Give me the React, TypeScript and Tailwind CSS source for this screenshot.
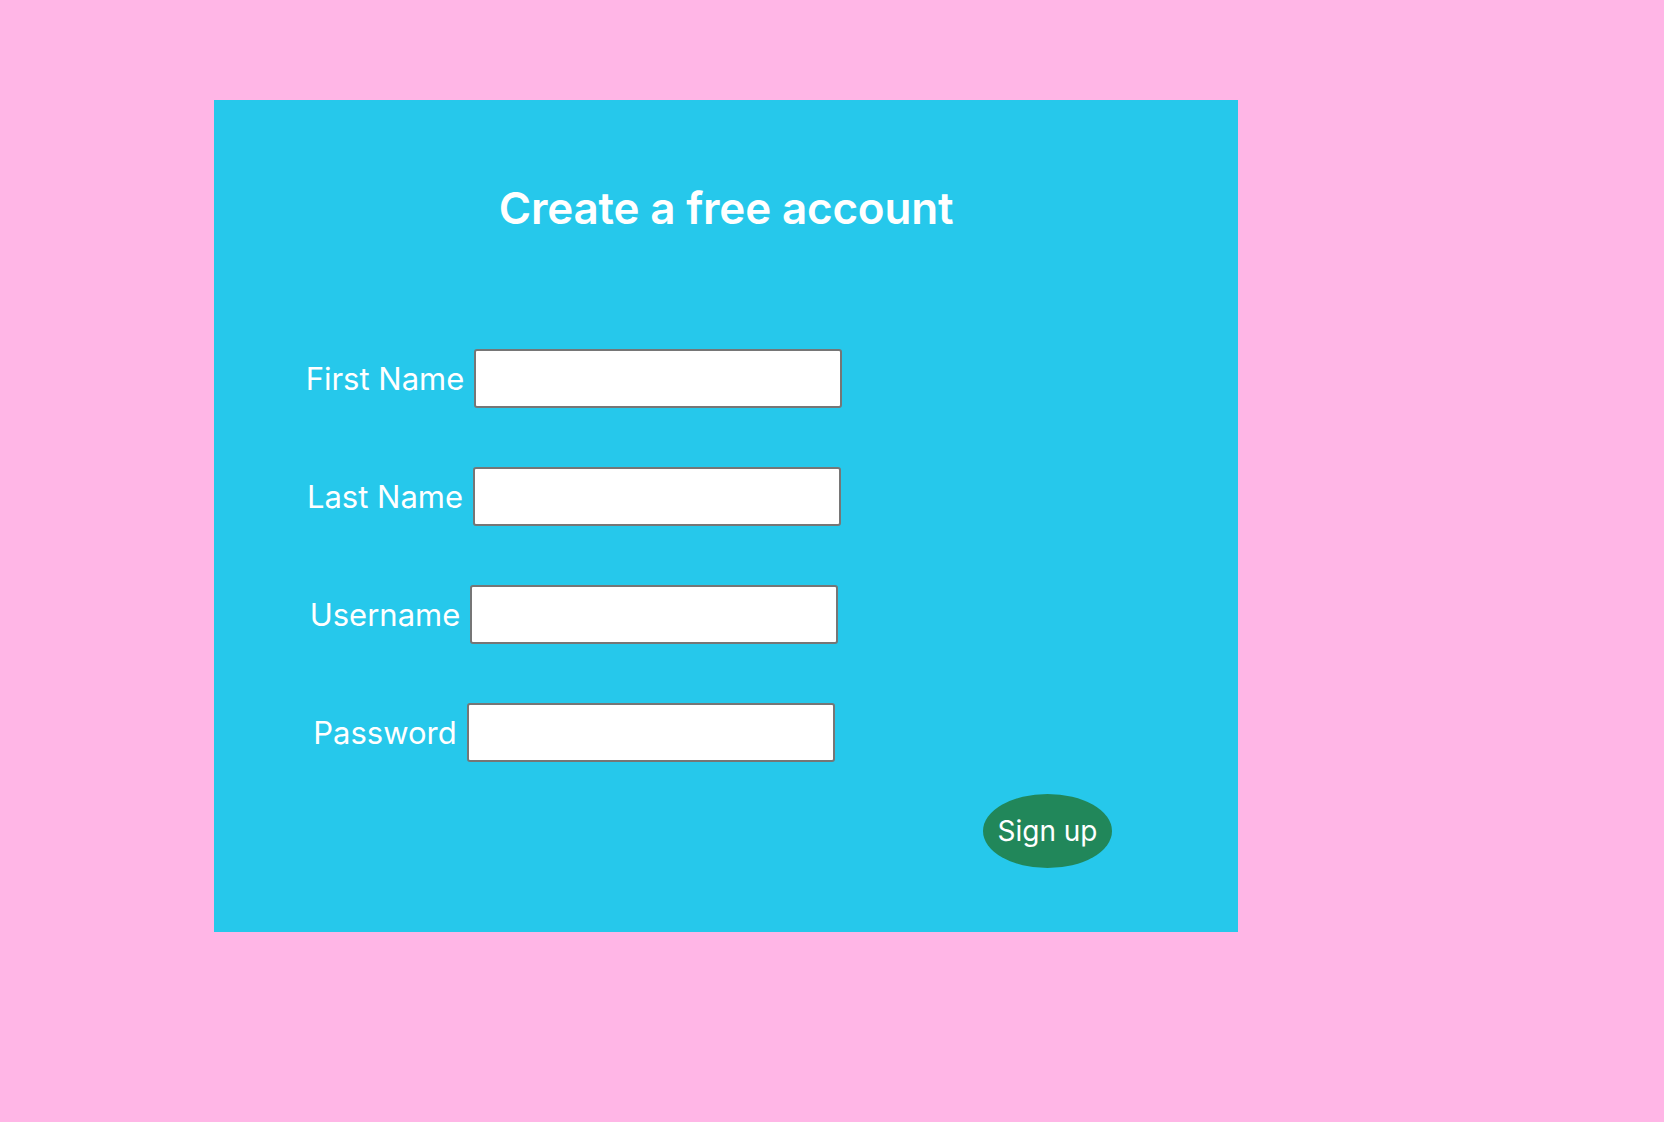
import React from "react";

const rows = ["First Name", "Last Name", "Username", "Password"];

export default function App() {
  return (
    <div className="min-h-[1122px] w-full bg-[#ffb6e6] pt-[100px] pl-[214px]" style={{ fontFamily: "Inter, 'Noto Sans', sans-serif" }}>
      <div className="flex h-[832px] w-[1024px] flex-col bg-[#26c8eb] pt-[80px] text-white">
        <h1 className="text-center text-[44px] font-semibold leading-[56px] tracking-[-0.2px]">Create a free account</h1>
        <form className="mt-[113px] flex w-[720px] flex-col gap-[59px]" onSubmit={(e) => e.preventDefault()}>
          {rows.map((r) => (
            <div key={r} className="flex h-[59px] items-center justify-center gap-[10px]">
              <label className="text-[31px] leading-none">{r}</label>
              <input
                type={r === "Password" ? "password" : "text"}
                className="h-[59px] w-[368px] rounded-[3px] border-2 border-[#767676] bg-white px-2 text-black"
              />
            </div>
          ))}
        </form>
        <div className="mt-[32px] flex justify-end pr-[126px]">
          <button className="flex h-[74px] w-[129px] items-center justify-center rounded-[50%] bg-[#21875a] text-[28px] text-white">
            Sign up
          </button>
        </div>
      </div>
    </div>
  );
}
